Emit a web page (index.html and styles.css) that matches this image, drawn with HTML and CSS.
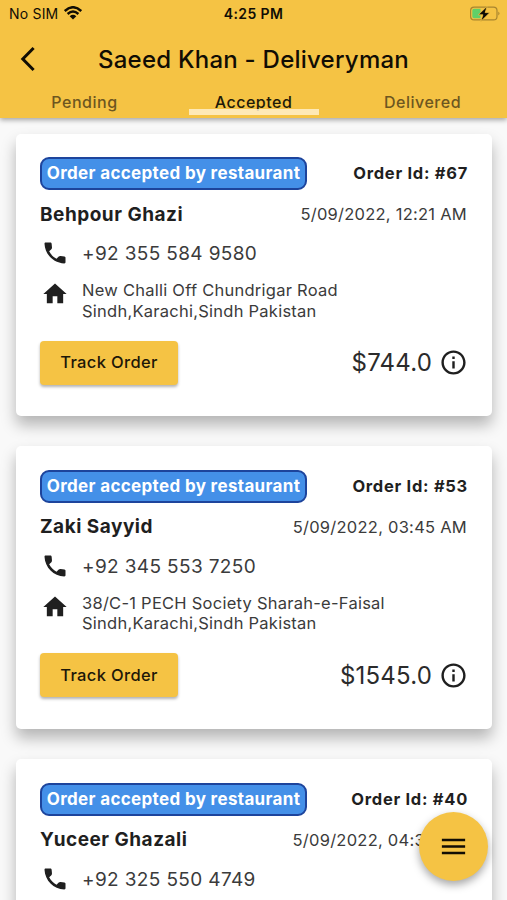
FILE: index.html
```html
<!DOCTYPE html>
<html lang="en">

<head>
    <meta charset="UTF-8">
    <meta name="viewport" content="width=device-width, initial-scale=1.0">
    <title>Deliveryman orders</title>
    <link rel="stylesheet" href="styles.css">
</head>

<body>
    <!-- shared icons -->
    <svg class="sprite">
        <symbol id="phone" viewBox="0 0 24 24">
            <path d="M20.100 14.900l-3.300-.4c-.6-.1-1.200.1-1.600.5l-1.900 1.900c-2.700-1.400-4.900-3.600-6.300-6.300l1.900-1.900c.4-.4.600-1 .5-1.600L9.100 3.900C9 3.400 8.600 3 8 3H4c-.6 0-1 .4-1 1 .5 9.300 7.700 16.500 17 17 .6 0 1-.4 1-1v-4.100c0-.5-.4-.9-.9-1z" />
        </symbol>
        <symbol id="home" viewBox="0 0 24 24">
            <path d="M10 20v-6h4v6h5v-8h3L12 3 2 12h3v8z" />
        </symbol>
        <symbol id="info" viewBox="0 0 24 24">
            <path d="M11 7h2v2h-2zm0 4h2v6h-2zm1-9C6.480 2 2 6.480 2 12s4.480 10 10 10 10-4.480 10-10S17.520 2 12 2zm0 18c-4.410 0-8-3.590-8-8s3.590-8 8-8 8 3.590 8 8-3.590 8-8 8z" />
        </symbol>
    </svg>

    <div class="app">
        <header class="header">
            <div class="status">
                <div class="carrier">
                    <span>No SIM</span>
                    <svg class="wifi" viewBox="0 0 18 14">
                        <path d="M.8 5Q9-2.600 17.200 5M3.600 8Q9 3 14.400 8" />
                        <path class="dot" d="M5.700 10.200Q9 7.300 12.300 10.200L9 13.500z" />
                    </svg>
                </div>
                <span class="time">4:25 PM</span>
                <svg class="battery" viewBox="0 0 30 16">
                    <rect class="shell" x=".6" y="1.100" width="26.400" height="12.800" rx="3.500" />
                    <path class="cap" d="M28.300 5.500q2.300 2 0 4z" />
                    <path class="level" d="M4 2.800h6.500v9.400H4a1.700 1.700 0 0 1-1.700-1.700v-6A1.700 1.700 0 0 1 4 2.800z" />
                    <path class="bolt" d="M17.200.2 8.300 8.800h4.600l-2.100 6.600L19.900 6.600h-4.700z" />
                </svg>
            </div>
            <div class="bar">
                <svg class="back" viewBox="0 0 16 26">
                    <path d="M13.600 2 2.800 13l10.800 11" />
                </svg>
                <h1 class="title">Saeed Khan - Deliveryman</h1>
            </div>
            <nav class="tabs">
                <a class="tab">Pending</a>
                <a class="tab active">Accepted</a>
                <a class="tab">Delivered</a>
            </nav>
        </header>

        <main class="list">
            <section class="card">
                <div class="row top">
                    <span class="badge">Order accepted by restaurant</span>
                    <span class="order-id">Order Id: #67</span>
                </div>
                <div class="row person">
                    <span class="name">Behpour Ghazi</span>
                    <span class="date">5/09/2022, 12:21 AM</span>
                </div>
                <div class="contact">
                    <svg class="icon"><use href="#phone" /></svg>
                    <span class="phone">+92 355 584 9580</span>
                </div>
                <div class="contact place">
                    <svg class="icon"><use href="#home" /></svg>
                    <p class="address">New Challi Off Chundrigar Road<br>Sindh,Karachi,Sindh Pakistan</p>
                </div>
                <div class="row bottom">
                    <button class="track">Track Order</button>
                    <div class="total">
                        <span class="price">$744.0</span>
                        <svg class="info"><use href="#info" /></svg>
                    </div>
                </div>
            </section>

            <section class="card">
                <div class="row top">
                    <span class="badge">Order accepted by restaurant</span>
                    <span class="order-id">Order Id: #53</span>
                </div>
                <div class="row person">
                    <span class="name">Zaki Sayyid</span>
                    <span class="date">5/09/2022, 03:45 AM</span>
                </div>
                <div class="contact">
                    <svg class="icon"><use href="#phone" /></svg>
                    <span class="phone">+92 345 553 7250</span>
                </div>
                <div class="contact place">
                    <svg class="icon"><use href="#home" /></svg>
                    <p class="address">38/C-1 PECH Society Sharah-e-Faisal<br>Sindh,Karachi,Sindh Pakistan</p>
                </div>
                <div class="row bottom">
                    <button class="track">Track Order</button>
                    <div class="total">
                        <span class="price">$1545.0</span>
                        <svg class="info"><use href="#info" /></svg>
                    </div>
                </div>
            </section>

            <section class="card">
                <div class="row top">
                    <span class="badge">Order accepted by restaurant</span>
                    <span class="order-id">Order Id: #40</span>
                </div>
                <div class="row person">
                    <span class="name">Yuceer Ghazali</span>
                    <span class="date">5/09/2022, 04:38 AM</span>
                </div>
                <div class="contact">
                    <svg class="icon"><use href="#phone" /></svg>
                    <span class="phone">+92 325 550 4749</span>
                </div>
            </section>
        </main>

        <button class="fab" aria-label="Menu">
            <svg viewBox="0 0 24 24"><path d="M3 18h18v-2H3v2zm0-5h18v-2H3v2zm0-7v2h18V6H3z" /></svg>
        </button>
    </div>
</body>

</html>
```
FILE: styles.css
```css
:root {
    --yellow: #f5c344;
    --ink: #1f1f1f;
    --text: #3b3b3b;
}

* {
    box-sizing: border-box;
}

html,
body {
    margin: 0;
    padding: 0;
}

body {
    font-family: Inter, "Liberation Sans", sans-serif;
    color: var(--ink);
    background: #f9f9f9;
}

.sprite {
    display: none;
}

.app {
    position: relative;
    height: 900px;
    overflow: hidden;
}

/* header */
.header {
    position: relative;
    z-index: 1;
    height: 118px;
    background: var(--yellow);
    color: #110d04;
    box-shadow: 0 2px 5px rgba(0, 0, 0, .35);
}

.status {
    display: grid;
    grid-template-columns: 1fr auto 1fr;
    align-items: center;
    height: 27px;
    padding: 0 7px 0 9px;
    font-size: 14px;
}

.carrier {
    display: flex;
    align-items: center;
    gap: 6px;
    letter-spacing: .2px;
}

.wifi {
    width: 18px;
    height: 14px;
    margin-top: -1px;
    fill: none;
    stroke: #110d04;
    stroke-width: 2.4;
}

.wifi .dot {
    fill: #110d04;
    stroke: none;
}

.time {
    margin-right: 2px;
    font-weight: 600;
    letter-spacing: .4px;
}

.battery {
    width: 30px;
    height: 16px;
    justify-self: end;
}

.battery .shell {
    fill: none;
    stroke: #a8852f;
    stroke-width: 1.2;
}

.battery .cap {
    fill: #a8852f;
}

.battery .level {
    fill: #5fd068;
}

.battery .bolt {
    fill: #0c0a05;
    stroke: var(--yellow);
    stroke-width: .8;
}

.bar {
    display: grid;
    grid-template-columns: 40px 1fr 40px;
    align-items: center;
    height: 64px;
}

.back {
    width: 16px;
    height: 26px;
    margin-left: 20px;
    fill: none;
    stroke: #110d04;
    stroke-width: 3;
}

.title {
    margin: 1px 0 0;
    text-align: center;
    font-size: 24px;
    font-weight: 500;
    line-height: 30px;
    letter-spacing: .24px;
    white-space: nowrap;
}

.tabs {
    display: grid;
    grid-template-columns: repeat(3, 1fr);
    height: 25px;
    text-align: center;
    font-size: 16px;
    font-weight: 500;
    line-height: 22px;
    letter-spacing: .52px;
}

.tab {
    position: relative;
    color: #6d5620;
}

.tab.active {
    color: #211a09;
}

.tab.active::after {
    content: "";
    position: absolute;
    left: 20px;
    right: 19px;
    bottom: 1px;
    height: 6px;
    background: rgba(255, 240, 202, .85);
}

/* orders */
.list {
    display: flex;
    flex-direction: column;
    gap: 30px;
    padding: 15.500px 15px 0 16px;
}

.card {
    flex: none;
    height: 282.800px;
    padding: 23.500px 25px 0 24px;
    background: #fff;
    border-radius: 5px;
    box-shadow: 0 9px 15px rgba(0, 0, 0, .28);
}

.row {
    display: flex;
    align-items: center;
    justify-content: space-between;
}

.badge {
    width: 267px;
    height: 33px;
    border: 2px solid #1d449c;
    border-radius: 9px;
    background: #4490e8;
    color: #fff;
    font-size: 17px;
    font-weight: 700;
    line-height: 29px;
    letter-spacing: .34px;
    text-align: center;
    white-space: nowrap;
}

.order-id {
    font-size: 16.500px;
    font-weight: 700;
    letter-spacing: .72px;
    margin-right: -1px;
}

.top .order-id {
    margin-top: -1px;
}

.person {
    height: 48px;
}

.name {
    font-size: 19px;
    font-weight: 700;
    letter-spacing: .5px;
}

.date {
    color: var(--text);
    font-size: 16.500px;
    letter-spacing: .25px;
}

.contact {
    display: flex;
    align-items: center;
    gap: 13px;
    height: 31px;
    padding-left: 1px;
}

.icon {
    width: 28px;
    height: 28px;
    margin-top: -1px;
    fill: var(--ink);
}

.phone {
    color: var(--text);
    font-size: 19px;
    letter-spacing: .36px;
}

.place {
    align-items: flex-start;
    height: 57px;
    margin-top: 11px;
}

.place .icon {
    margin-top: 0;
}

.address {
    margin: 0;
    color: var(--text);
    font-size: 16.500px;
    line-height: 20.500px;
    letter-spacing: .25px;
}

.bottom {
    margin-top: 3.500px;
}

.track {
    width: 138px;
    height: 44px;
    padding: 0 0 1px;
    border: 0;
    border-radius: 4px;
    background: var(--yellow);
    color: #1d1708;
    font: inherit;
    font-size: 16.500px;
    font-weight: 500;
    letter-spacing: .36px;
    box-shadow: 0 2px 3px rgba(0, 0, 0, .3);
}

.total {
    display: flex;
    align-items: center;
    gap: 7px;
}

.price {
    color: #2b2b2b;
    font-size: 24px;
    letter-spacing: .2px;
}

.info {
    width: 29px;
    height: 29px;
    margin-right: -1px;
    fill: var(--ink);
}

.fab {
    position: absolute;
    z-index: 2;
    left: 419px;
    top: 812px;
    display: flex;
    align-items: center;
    justify-content: center;
    width: 69px;
    height: 69px;
    padding: 0;
    border: 0;
    border-radius: 50%;
    background: var(--yellow);
    box-shadow: 0 4px 8px rgba(0, 0, 0, .35);
}

.fab svg {
    width: 31px;
    height: 31px;
    fill: #110d04;
}
```
